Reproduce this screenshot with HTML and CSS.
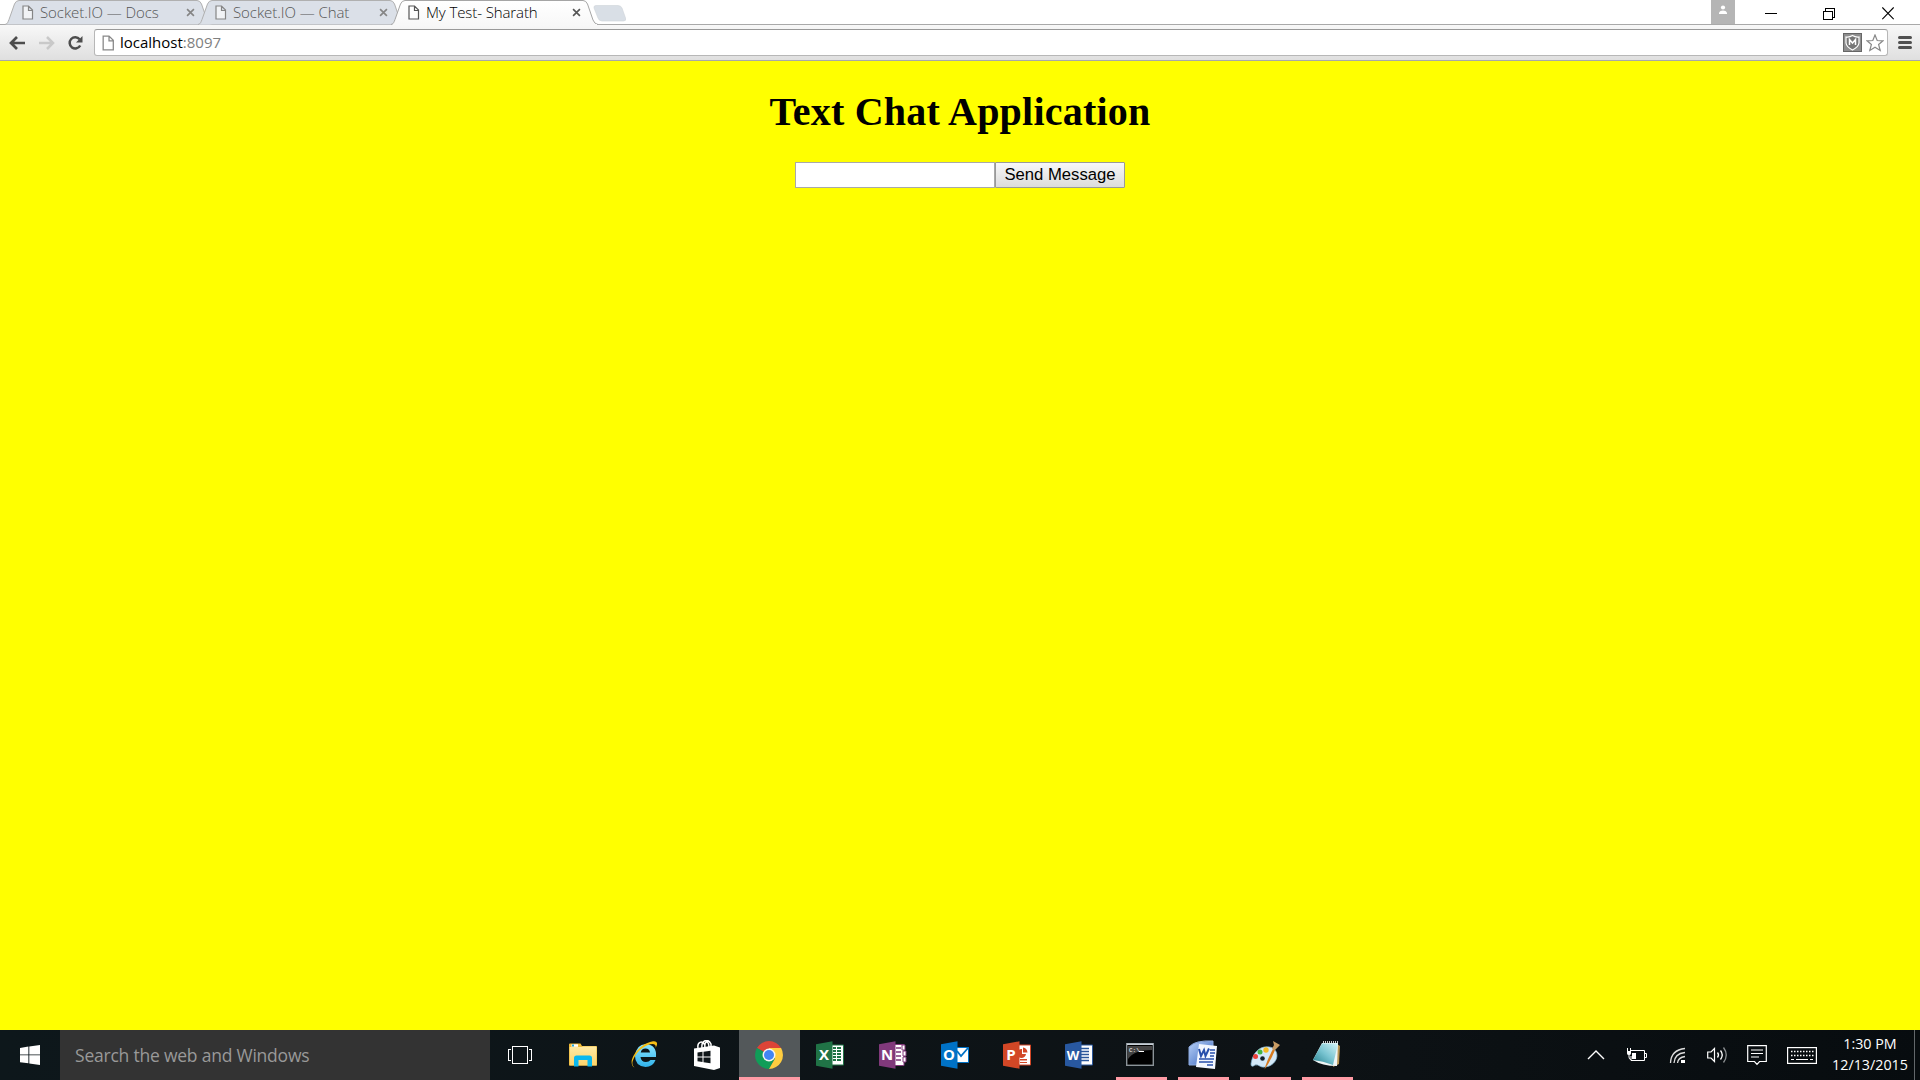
FILE: index.html
```html
<!DOCTYPE html>
<html lang="en">
<head>
<meta charset="utf-8">
<title>My Test- Sharath</title>
<link rel="stylesheet" href="styles.css">
</head>
<body>
<svg width="0" height="0" class="defs">
  <defs>
    <linearGradient id="gold" x1="0" y1="0" x2="0" y2="1"><stop offset="0" stop-color="#ffeaa5"/><stop offset="1" stop-color="#fbd36b"/></linearGradient>
    <linearGradient id="ie" x1="0" y1="0" x2="0" y2="1"><stop offset="0" stop-color="#8be5ff"/><stop offset="1" stop-color="#2fb2ea"/></linearGradient>
    <linearGradient id="blue" x1="0" y1="0" x2="1" y2="1"><stop offset="0" stop-color="#b9d2f8"/><stop offset="1" stop-color="#3563bb"/></linearGradient>
    <linearGradient id="teal" x1="0" y1="1" x2="1" y2="0"><stop offset="0" stop-color="#237f8d"/><stop offset=".5" stop-color="#79c4d1"/><stop offset="1" stop-color="#d5f4f7"/></linearGradient>
    <linearGradient id="tabfill" x1="0" y1="0" x2="0" y2="1"><stop offset="0" stop-color="#fff"/><stop offset="1" stop-color="#f8f8f8"/></linearGradient>
    <symbol id="page" viewBox="0 0 12 15"><path d="M1 1H6.5L10.5 5V14H1ZM6.5 1V5.500H10.500" fill="#fff" fill-opacity=".6" stroke="currentColor" stroke-width="1.200"/></symbol>
    <symbol id="x" viewBox="0 0 10 10"><path d="M1.200 1.200 8.800 8.800M8.800 1.200 1.200 8.800" stroke="currentColor" stroke-width="1.800"/></symbol>
  </defs>
</svg>
<div class="screen">
  <header class="tabstrip">
    <div class="tab">
      <svg class="shape" width="208" height="25"><path d="M0 24.500C2.500 24 3 22 4 19.500L9.500 4Q11 .5 14 .5H192Q195 .5 196.500 4L202 20Q203.500 24 207 24.500" fill="#dbe0e8" stroke="#b0b0b0"/></svg>
      <svg class="page" width="12" height="15"><use href="#page"/></svg><span class="title docs">Socket.IO — Docs</span><svg class="x" width="9" height="9"><use href="#x"/></svg>
    </div>
    <div class="tab">
      <svg class="shape" width="208" height="25"><path d="M0 24.500C2.500 24 3 22 4 19.500L9.500 4Q11 .5 14 .5H192Q195 .5 196.500 4L202 20Q203.500 24 207 24.500" fill="#dbe0e8" stroke="#b0b0b0"/></svg>
      <svg class="page" width="12" height="15"><use href="#page"/></svg><span class="title chat">Socket.IO — Chat</span><svg class="x" width="9" height="9"><use href="#x"/></svg>
    </div>
    <div class="tab active">
      <svg class="shape" width="208" height="25"><path d="M0 24.500C2.500 24 3 22 4 19.500L9.500 4Q11 .5 14 .5H192Q195 .5 196.500 4L202 20Q203.500 24 207 24.500" fill="url(#tabfill)" stroke="#a5a5a5"/></svg>
      <svg class="page" width="12" height="15"><use href="#page"/></svg><span class="title mine">My Test- Sharath</span><svg class="x" width="9" height="9"><use href="#x"/></svg>
    </div>
    <svg class="newtab" width="34" height="18"><path d="M3 .5H25Q28 .5 29 3L32.500 13Q33.500 16 30.500 16H9Q6 16 5 13L1 3Q.5 .5 3 .5Z" fill="#d9dfe6" stroke="#cfd3d9" stroke-width=".6"/></svg>
    <div class="window">
      <div class="user"><svg width="10" height="10"><circle cx="5" cy="2.500" r="2.100" fill="#fff"/><path d="M1 9V7.500Q2 5.500 5 5.500T9 7.500V9Z" fill="#fff"/></svg></div>
      <svg class="min" width="12" height="13" shape-rendering="crispEdges"><path d="M0 6.500H12" stroke="#000"/></svg>
      <svg class="max" width="12" height="13" shape-rendering="crispEdges"><path d="M.5 3.500H9.500V11.500H.5ZM2.500 3V.5H11.500V9.500H10" fill="none" stroke="#000"/></svg>
      <svg class="close" width="12" height="13"><path d="M.3 .5 11.700 12.200M11.700 .5 .3 12.200" stroke="#000" stroke-width="1.200"/></svg>
    </div>
  </header>
  <nav class="toolbar">
    <svg class="back" width="16" height="14"><path d="M8 1 2 7 8 13M2 7H16" fill="none" stroke="#4d4d4d" stroke-width="2.700"/></svg>
    <svg class="fwd" width="16" height="14"><path d="M8 1 14 7 8 13M14 7H0" fill="none" stroke="#c9c9c9" stroke-width="2.500"/></svg>
    <svg class="reload" width="17" height="16"><path d="M12.600 4.300A5.600 5.600 0 1 0 13.200 10.500" fill="none" stroke="#4d4d4d" stroke-width="2.500"/><path d="M15.500 1V7.500H9Z" fill="#4d4d4d"/></svg>
    <div class="address">
      <svg class="page" width="13" height="16"><use href="#page"/></svg>
      <span class="url">localhost<i>:8097</i></span>
      <svg width="19" height="19" class="shield"><rect width="19" height="19" fill="#666"/><rect x="1" y="1" width="17" height="17" fill="#8e8e8e"/><path d="M3 4Q6.500 4.500 9.500 2.500Q12.500 4.500 16 4V10Q15.500 14 9.500 17Q3.500 14 3 10Z" fill="#777" stroke="#fff" stroke-width="1.200"/><path d="M6.500 12V6.500L9.500 10 12.500 6.500V12" fill="none" stroke="#fff" stroke-width="1.500"/></svg>
      <svg width="18" height="18"><path d="M9 1 11.200 6.500 17 6.800 12.600 10.500 14.200 16.500 9 13.300 3.800 16.500 5.400 10.500 1 6.800 6.800 6.500Z" fill="#fff" stroke="#888" stroke-width="1.200"/></svg>
    </div>
    <svg class="menu" width="14" height="13"><path d="M1.500 1.500H12.500M1.500 6.500H12.500M1.500 11.500H12.500" stroke="#505050" stroke-width="3" stroke-linecap="round"/></svg>
  </nav>
  <main class="page-body">
    <h1>Text Chat Application</h1>
    <form class="chat-form"><input type="text"><button type="button">Send Message</button></form>
  </main>
  <footer class="taskbar">
    <div class="start"><svg width="20" height="20"><path d="M0 2.900 8.400 1.600V9.400H0ZM9.300 1.400 20 0V9.400H9.300ZM0 10.300H8.400V18.300L0 17.200ZM9.300 10.300H20V20L9.300 18.500Z" fill="#fff"/></svg></div>
    <div class="search"><span>Search the web and Windows</span></div>
    <div class="app nudge"><svg width="24" height="18" shape-rendering="crispEdges"><path d="M4.500 .5H19.500V17.500H4.500ZM3 3.500H.5V14.500H3M21 3.500H23.500V14.500H21" fill="none" stroke="#fff"/></svg></div>
    <div class="app"><svg width="28" height="28"><path d="M0 3.500Q0 2.500 1 2.500H11.500L13 5H27Q28 5 28 6V24.500H0Z" fill="#eeb936"/><path d="M.7 6H12.500L14 5.500H27.500V24.500H.7Z" fill="url(#gold)"/><rect x="2.500" y="3.300" width="6.500" height="2.500" fill="#fff"/><rect x="3" y="3.500" width="2" height="2" fill="#20a9df"/><path d="M5 25.500V17Q5 14.500 7.500 14.500H20.500Q23 14.500 23 17V25.500H18.500V19H9.500V25.500Z" fill="#09b8ef"/></svg></div>
    <div class="app nudge"><svg width="30" height="30"><path d="M27 17H11.500Q12 22 17 22Q20 22 21.500 20H26.500Q24 27 16.500 27Q6 26 6 16Q7 4.500 17 4Q28 5 27 17ZM11.700 12.500H21Q20.500 8.500 16.500 8.500T11.700 12.500Z" fill="url(#ie)" fill-rule="evenodd"/><path d="M5.500 27.500C-3 23 9 4 23 1.500C29 .5 29 4 26.500 8C29 -1 10 6 5 18C3 22 2.500 25 5.500 27.500Z" fill="#f5bd16"/></svg></div>
    <div class="app"><svg width="26" height="30"><path d="M4 8C3 2 8 0 11 5M8 8C7 0 14-2 17 4V8M11 8C10 1 15-1 15 8" fill="none" stroke="#fff" stroke-width="1.500"/><path d="M0 8.500 20 5.500V30L0 26ZM20 5.500 26 7.500V28L20 30Z" fill="#fff"/><path d="M3.500 12.500 8.500 11.800V16.500H3.500ZM9.500 11.700 16.500 10.700V16.500H9.500ZM3.500 17.500H8.500V22L3.500 21.300ZM9.500 17.500H16.500V23.300L9.500 22.200Z" fill="#10171a"/></svg></div>
    <div class="app running current"><svg width="28" height="28"><path d="M14 14 1.900 7A14 14 0 0 1 26.100 7Z" fill="#dc4437"/><path d="M14 14 1.900 7A14 14 0 0 0 14 28L20 17.500Z" fill="#109d58"/><path d="M14 14 14 7H26.100A14 14 0 0 1 14 28L20 17.500Z" fill="#ffcd40"/><circle cx="14" cy="14" r="6.500" fill="#f5f5f5"/><circle cx="14" cy="14" r="5" fill="#4285f4"/></svg></div>
    <div class="app nudge"><svg width="28" height="28"><path d="M13 4H27.500V24H13Z" fill="#fff" stroke="#207346"/><path d="M17 6H20V8H17ZM21 6H25V8H21ZM17 9H20V11H17ZM21 9H25V11H21ZM17 12H20V14H17ZM21 12H25V14H21ZM17 15H20V17H17ZM21 15H25V17H21ZM17 18H20V20H17ZM21 18H25V20H21Z" fill="#207346"/><path d="M0 3.200 16.500 .3V27.700L0 24.800Z" fill="#207346"/><text x="8" y="19" class="letter">X</text></svg></div>
    <div class="app"><svg width="28" height="28"><path d="M15 3.500H25V24.500H15Z" fill="#fff" stroke="#80397b"/><path d="M17 7H22M17 11H22M17 15H22M17 19H22" stroke="#80397b" stroke-width="1.500"/><path d="M23 4H26V9H23ZM24 10H27V15H24ZM24 16H27V21H24Z" fill="#fff" stroke="#80397b"/><path d="M0 3.200 16.500 .3V27.700L0 24.800Z" fill="#80397b"/><text x="8" y="19" class="letter">N</text></svg></div>
    <div class="app"><svg width="28" height="28"><path d="M15 6.500H27.500V21.500H15Z" fill="#fff" stroke="#0072c6"/><path d="M16 10 20 15 27 7" fill="none" stroke="#0072c6" stroke-width="1.800"/><path d="M0 3.200 16.500 .3V27.700L0 24.800Z" fill="#0072c6"/><text x="8" y="19" class="letter">O</text></svg></div>
    <div class="app"><svg width="28" height="28"><path d="M15 4H27.500V24H15Z" fill="#fff" stroke="#d24726"/><path d="M19 8A4.500 4.500 0 1 0 23 13H19ZM20 6.500V11.500H24.500Q24 7 20 6.500ZM17 18H24V19.500H17ZM17 21H24V22H17Z" fill="#d24726"/><path d="M0 3.200 16.500 .3V27.700L0 24.800Z" fill="#d24726"/><text x="8" y="19" class="letter">P</text></svg></div>
    <div class="app"><svg width="28" height="28"><path d="M15 4H27.500V24H15Z" fill="#fff" stroke="#2b579a"/><path d="M16 7.500H24M16 10.500H24M16 13.500H24M16 16.500H24M16 19.500H24" stroke="#2b579a" stroke-width="1.300"/><path d="M0 3.200 16.500 .3V27.700L0 24.800Z" fill="#2858a0"/><text x="8" y="19" class="letter w">W</text></svg></div>
    <div class="app nudge running"><svg class="cmd" width="28" height="24"><rect x=".7" y="1.700" width="26.600" height="21.600" fill="#000" stroke="#8b9398" stroke-width="1.400"/><path d="M1 1.500H27V3H1Z" fill="#c7d0d8"/><path d="M2 4H26V8Q8 8 2 17Z" fill="#444"/><text x="3" y="9.500" class="prompt">C:\.</text><path d="M13 9.500H18" stroke="#fff"/></svg></div>
    <div class="app nudge running"><svg width="29" height="30"><path d="M1 7Q7 0 25 1V25H1Z" fill="url(#blue)" stroke="#8ba9df"/><path d="M11 4 29 6 27 29 8 27Z" fill="#f4f8ff"/><path d="M11 9 13 16 16 10 17.500 16 21 8.500" stroke="#2850ac" stroke-width="2" fill="none"/><path d="M22 10H27M22 13H27M22 16H26M11 19H26M11 22H25M19 25H25" stroke="#2850ac" stroke-width="1.700"/></svg></div>
    <div class="app running"><svg width="30" height="30"><path d="M1 24C3 10 13 4 23 8C31 14 26 26 15 27C10 28 9 24 5 25Q1 28 1 24Z" fill="#d4e9f8" stroke="#88b9d6" stroke-width=".7"/><circle cx="5.500" cy="16.500" r="2.500" fill="#ed4139"/><circle cx="10" cy="12" r="2.500" fill="#45b543"/><circle cx="16" cy="10" r="2.700" fill="#f5ba23"/><circle cx="12.500" cy="18.500" r="2.300" fill="#142129"/><path d="M14.500 29.500Q16 22 23 9L25 10Q20 22 14.500 29.500Z" fill="#d77b20"/><path d="M22 9 24 5 23 1 30 5 25 10Z" fill="#c99c65"/></svg></div>
    <div class="app running"><svg width="30" height="30"><path d="M25 4 28 6 27 24 21 27Z" fill="#b99554"/><path d="M10 3H26L25 26Q10 26 1 20Z" fill="#eef5f5"/><path d="M10 3.500H26L21 25Q11 21 1 20Z" fill="url(#teal)"/><path d="M11 2H26" stroke="#ccc" stroke-width="2" stroke-dasharray="1 1"/></svg></div>
    <div class="tray">
      <svg width="18" height="12"><path d="M1 10 9 2 17 10" fill="none" stroke="#fff" stroke-width="1.400"/></svg>
      <svg class="battery" width="21" height="15"><path d="M5 2.500H18.500V12.500H5V8M19 5.500H20.500V9.500H19" fill="none" stroke="#fff"/><path d="M6 5H10V11H6ZM1 3H5V5.500Q5 7 3 7T1 5.500Z" fill="#fff"/><path d="M1.500 0V3M4.500 0V3M3 7V9Q3 11.500 5 11.500" fill="none" stroke="#fff"/></svg>
      <svg class="wifi" width="17" height="17"><path d="M1.500 16Q2 3 16 1.500M5 16Q5.500 6.500 16 5.500M8.500 16Q9 10.500 16 9.500" fill="none" stroke="#ddd" stroke-width="1.300"/><rect x="12" y="13" width="4" height="3" fill="#fff"/></svg>
      <svg class="sound" width="22" height="18"><path d="M.7 6H4L7.500 2.500V15.500L4 12H.7Z" fill="none" stroke="#fff" stroke-width="1.200"/><path d="M10.500 6.500Q12.500 9 10.500 11.500M13.500 4.500Q17 9 13.500 13.500" fill="none" stroke="#fff" stroke-width="1.300"/><path d="M16.500 1.500Q22 9 16.500 16.500" fill="none" stroke="#8a8e90" stroke-width="1.300"/></svg>
      <svg class="notice" width="20" height="21"><path d="M.7 .7H19.300V16.500H12.500L10 19.300 7.500 16.500H.7ZM4 5H16M4 8.500H16M4 12H12" fill="none" stroke="#fff" stroke-width="1.200"/></svg>
      <svg class="keys" width="30" height="17"><rect x=".6" y=".6" width="28.800" height="15.800" fill="none" stroke="#fff" stroke-width="1.200"/><path d="M4 4.500H27M4 8.500H27" stroke="#fff" stroke-width="1.500" stroke-dasharray="1.500 1.500"/><path d="M4 12.500H7M9 12.500H21M23 12.500H26" stroke="#fff" stroke-width="1.200"/></svg>
      <div class="clock"><span class="time">1:30 PM</span><span class="date">12/13/2015</span></div>
      <div class="peek"></div>
    </div>
  </footer>
</div>
</body>
</html>
```
FILE: styles.css
```css
* { box-sizing: border-box; }
body { margin: 0; overflow: hidden; }
svg { display: block; flex: none; }
.defs { position: absolute; }
.screen { width: 1920px; height: 1080px; display: flex; flex-direction: column; background: #ff0; font-family: "Open Sans", "Noto Sans", sans-serif; }
.tabstrip { height: 25px; display: flex; align-items: flex-start; padding-left: 5px; background: linear-gradient(#fff 24px, #a9a9a9 24px); }
.tab { width: 208px; height: 25px; margin-right: -15px; position: relative; display: flex; align-items: center; padding: 0 18px 0 17px; color: #858585; isolation: isolate; }
.active { color: #555; z-index: 2; margin-right: 0; }
.active::after { content: ""; position: absolute; z-index: -1; left: 2px; right: 2px; bottom: 0; height: 1px; background: #f8f8f8; }
.shape { position: absolute; z-index: -1; left: 0; top: 0; }
.title { margin: -1px 0 0 6px; flex: 1; font-size: 15px; line-height: 23px; white-space: nowrap; font-weight: 300; color: #555; letter-spacing: -.07px; }
.mine { color: #000; letter-spacing: -.1px; }
.newtab { margin: 5px 0 0 -6px; }
.window { margin-left: auto; display: flex; align-items: flex-start; }
.user { width: 24px; height: 24px; background: #b5b5b5; display: flex; justify-content: center; padding-top: 5px; }
.min { margin: 7px 0 0 30px; }
.max { margin: 8px 0 0 46px; }
.close { margin: 7px 26px 0 47px; }
.toolbar { height: 36px; display: flex; align-items: center; padding: 0 9px; background: linear-gradient(#f8f8f8, #dfdfdf); border-bottom: 1px solid #a8a8a8; }
.fwd { margin-left: 14px; }
.reload { margin-left: 12px; }
.address { margin: 0 10px; flex: 1; height: 27px; border: 1px solid #b7b7b7; border-top-color: #999; border-radius: 3px; background: #fff; display: flex; align-items: center; padding: 0 3px 0 7px; }
.address .page { color: #888; }
.url { margin: -2px 0 0 5px; flex: 1; font-size: 15px; color: #000; }
.url i { font-style: normal; color: #808080; }
.shield { margin-right: 4px; }
.menu { margin-right: -1px; }
.page-body { flex: 1; display: flex; flex-direction: column; align-items: center; padding-top: 28px; }
h1 { margin: 0; font: bold 40px/46px "Liberation Serif", serif; letter-spacing: .22px; }
.chat-form { margin-top: 27px; display: flex; height: 26px; }
.chat-form input { width: 200px; border: 1px solid #a9a9a9; background: #fff; padding: 0; }
.chat-form button { width: 130px; border: 1px solid #999; background: linear-gradient(#f7f7f7, #dcdcdc); border-radius: 1px; padding: 0; font: 16.667px/22px "Liberation Sans", sans-serif; color: #000; white-space: nowrap; }
.taskbar { height: 50px; display: flex; background: linear-gradient(90deg, #0d171b, #0d1215 1300px, #070c0f); }
.start { width: 60px; display: flex; align-items: center; justify-content: center; }
.search { width: 430px; background: #333; color: #999; display: flex; align-items: center; padding: 0 0 1px 15px; font-size: 17.500px; letter-spacing: -.22px; white-space: nowrap; }
.app { width: 62px; display: flex; align-items: center; justify-content: center; position: relative; }
.nudge { padding-right: 2px; }
.cmd { margin-bottom: 2px; }
.running::after { content: ""; position: absolute; height: 3px; left: 6px; right: 5px; bottom: 0; background: #ff9ba5; }
.current { width: 61px; margin-left: 1px; padding-right: 1px; background: #53585a; }
.current::after { left: 0; right: 0; }
.letter { font: bold 15px "Open Sans", sans-serif; fill: #fff; text-anchor: middle; }
.w { font-size: 13px; }
.prompt { font: 6px "Liberation Mono", monospace; fill: #fff; }
.tray { margin-left: auto; display: flex; align-items: center; }
.tray > svg:first-child { margin-right: 1px; }
.battery { margin-left: 20px; }
.wifi { margin-left: 22px; }
.sound { margin-left: 21px; }
.notice { margin-left: 18px; }
.keys { margin-left: 20px; }
.clock { width: 97px; display: flex; flex-direction: column; text-align: center; color: #fff; font-size: 14.300px; line-height: 21px; white-space: nowrap; padding: 0 0 2px 9px; }
.peek { width: 6px; height: 50px; border-left: 1px solid #62676a; }
```
